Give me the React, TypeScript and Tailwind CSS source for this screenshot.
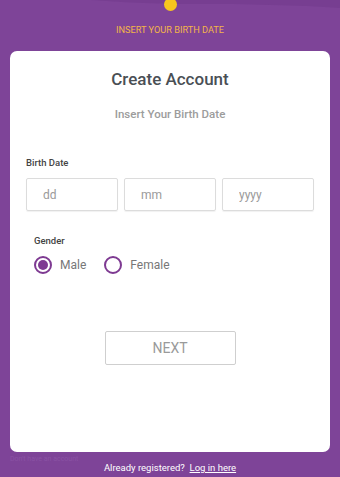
export default function App() {
  return (
    <div
      className="relative w-[340px] h-[477px] overflow-hidden bg-[#7e4498] flex flex-col"
      style={{ fontFamily: 'Roboto, "Noto Sans", sans-serif' }}
    >
      {/* darker wave at the top */}
      <svg className="absolute left-0 top-0" width="340" height="20" viewBox="0 0 340 20">
        <path d="M0 0 H340 V8 C300 5 240 4 200 4 C150 4 120 2 90 0 Z" fill="#773e91" />
      </svg>
      <div className="absolute left-[164px] top-[-2px] w-[13px] h-[13px] rounded-full bg-[#f7c51e]" />

      <div className="relative flex flex-col h-full">
        <div className="h-[51px] flex items-start justify-center pt-[23px]">
          <span className="text-[9.2px] text-[#f3b548]">INSERT YOUR BIRTH DATE</span>
        </div>

        <div className="mx-[10px] h-[401px] bg-white rounded-[7px] flex flex-col">
          <h1 className="mt-[18px] text-center text-[17px] font-medium text-[#4a4f55] leading-[20px]">
            Create Account
          </h1>
          <p className="mt-[18px] text-center text-[11.5px] font-medium text-[#9c9c9c] leading-[14px]">
            Insert Your Birth Date
          </p>

          <label className="mt-[36px] ml-[16px] text-[9.5px] font-medium text-[#444] leading-[12px]">
            Birth Date
          </label>
          <div className="mt-[9px] mx-[16px] grid grid-cols-3 gap-[6px]">
            {['dd', 'mm', 'yyyy'].map((p) => (
              <input
                key={p}
                placeholder={p}
                className="h-[33px] w-full rounded-[2px] border border-[#dcdcdc] pl-[16px] text-[12px] text-[#444] placeholder:text-[#9a9a9a] outline-none shadow-[0_1px_1px_rgba(0,0,0,0.06)]"
              />
            ))}
          </div>

          <label className="mt-[24px] ml-[24px] text-[9.5px] font-medium text-[#444] leading-[12px]">
            Gender
          </label>
          <div className="mt-[9px] ml-[24px] flex items-center">
            <span className="w-[18px] h-[18px] rounded-full border-2 border-[#7e3a92] flex items-center justify-center">
              <span className="w-[10px] h-[10px] rounded-full bg-[#7e3a92]" />
            </span>
            <span className="ml-[8px] text-[12px] text-[#777]">Male</span>
            <span className="ml-[18px] w-[18px] h-[18px] rounded-full border-2 border-[#7e3a92]" />
            <span className="ml-[8px] text-[12px] text-[#777]">Female</span>
          </div>

          <div className="mt-[57px] flex justify-center">
            <button className="w-[131px] h-[34px] border border-[#cfcfcf] rounded-[2px] text-[14px] text-[#9a9a9a]">
              NEXT
            </button>
          </div>
        </div>

        <div className="relative flex-1 flex items-start justify-center pt-[9px]">
          <span className="absolute left-[10px] top-[2px] text-[7px] text-[#8a52a4]">Don't have an account</span>
          <span className="text-[9.5px] text-white">
            Already registered?&nbsp; <span className="underline">Log in here</span>
          </span>
        </div>
      </div>
    </div>
  )
}
